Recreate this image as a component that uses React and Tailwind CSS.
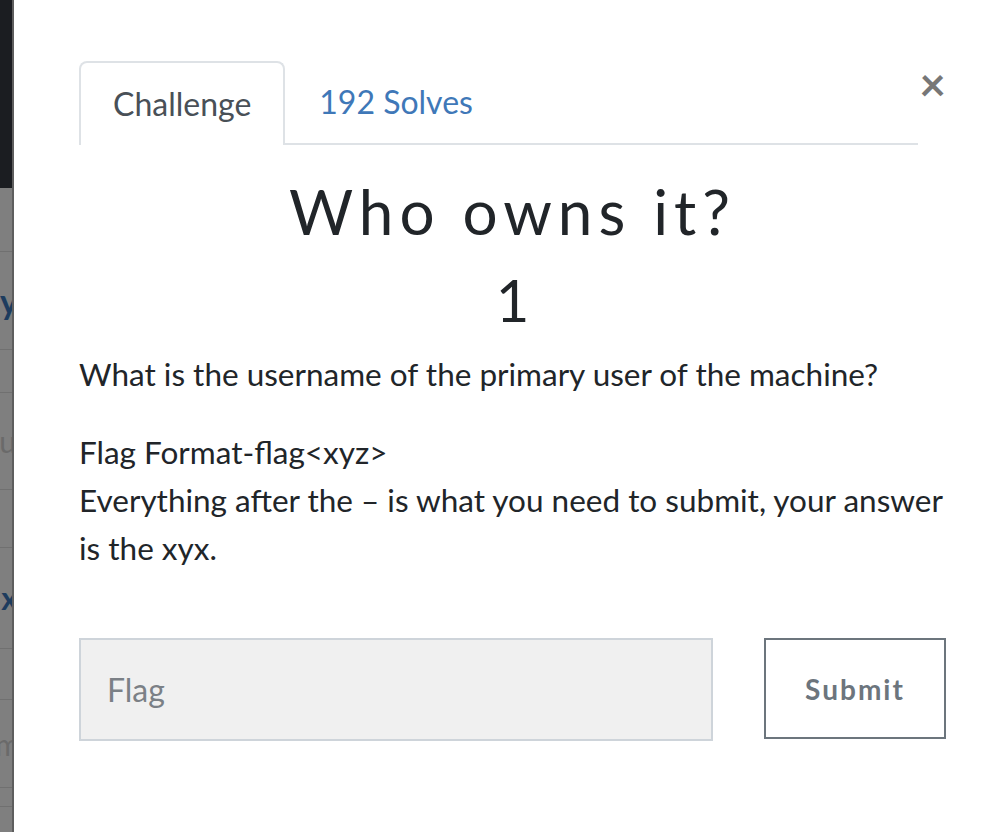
export default function App() {
  const lato = { fontFamily: 'Lato, "Liberation Sans", sans-serif' };
  return (
    <div className="flex h-[832px] w-[996px] overflow-hidden bg-white" style={lato}>
      {/* backdrop strip */}
      <div className="flex w-[12px] shrink-0 flex-col bg-[#7f7f7f]">
        <div className="h-[188px] shrink-0 bg-[#1b1d21]" />
        <div className="h-[64px] shrink-0 border-b border-[#707070]" />
        <div className="flex h-[98px] shrink-0 items-center justify-end overflow-hidden border-b border-[#707070]">
          <span className="-mr-[6px] text-[34px] font-bold leading-none text-[#1d3c5e]">y</span>
        </div>
        <div className="h-[43px] shrink-0 border-b border-[#707070]" />
        <div className="flex h-[97px] shrink-0 items-center justify-end overflow-hidden border-b border-[#707070]">
          <span className="-mr-[4px] text-[30px] leading-none text-[#6a6a6a]">u</span>
        </div>
        <div className="h-[58px] shrink-0 border-b border-[#707070]" />
        <div className="flex h-[101px] shrink-0 items-center justify-end overflow-hidden border-b border-[#707070]">
          <span className="-mr-[6px] text-[32px] font-bold leading-none text-[#1d3c5e]">x</span>
        </div>
        <div className="h-[51px] shrink-0 border-b border-[#707070]" />
        <div className="flex h-[88px] shrink-0 items-center justify-end overflow-hidden border-b border-[#707070]">
          <span className="-mr-[8px] text-[30px] leading-none text-[#6a6a6a]">m</span>
        </div>
        <div className="h-[19px] shrink-0 border-b border-[#707070]" />
        <div className="flex-1" />
      </div>
      <div className="w-[2px] shrink-0 bg-[#5e5e5e]" />

      {/* modal */}
      <div className="flex-1 bg-white pl-[65px] pr-[50px] pt-[61px]">
        <div className="flex items-start">
          <div className="flex flex-1 border-b-2 border-[#dee2e6]">
            <div className="-mb-[2px] flex h-[84px] items-center rounded-t-[8px] border-2 border-b-0 border-[#dee2e6] bg-white px-[32px] text-[32px] text-[#495057]">
              Challenge
            </div>
            <div className="flex h-[82px] items-center px-[34px] text-[32px] text-[#3f78b8]">
              192 Solves
            </div>
          </div>
          <div className="flex w-[28px] justify-end">
            <span className="text-[46px] font-bold leading-none text-[#777777]">×</span>
          </div>
        </div>

        <div className="mt-[29px] text-center text-[62px] leading-[74px] tracking-[6px] text-[#212529]">
          Who owns it?
        </div>
        <div className="mt-[18px] text-center text-[58px] leading-[68px] text-[#212529]">1</div>

        <div className="mt-[16px] text-[31.5px] leading-[48px] text-[#212529]">
          <p>What is the username of the primary user of the machine?</p>
          <p className="mt-[30px]">Flag Format-flag&lt;xyz&gt;</p>
          <p>Everything after the – is what you need to submit, your answer is the xyx.</p>
        </div>

        <div className="mt-[66px] flex items-start justify-between">
          <div className="flex h-[103px] w-[634px] items-center border-2 border-[#ced4da] bg-[#f0f0f0] px-[26px] text-[32px] text-[#7b8086]">
            Flag
          </div>
          <div className="flex h-[101px] w-[182px] items-center justify-center border-2 border-[#6c757d] text-[28px] font-bold tracking-[2px] text-[#6c757d]">
            Submit
          </div>
        </div>
      </div>
    </div>
  );
}
